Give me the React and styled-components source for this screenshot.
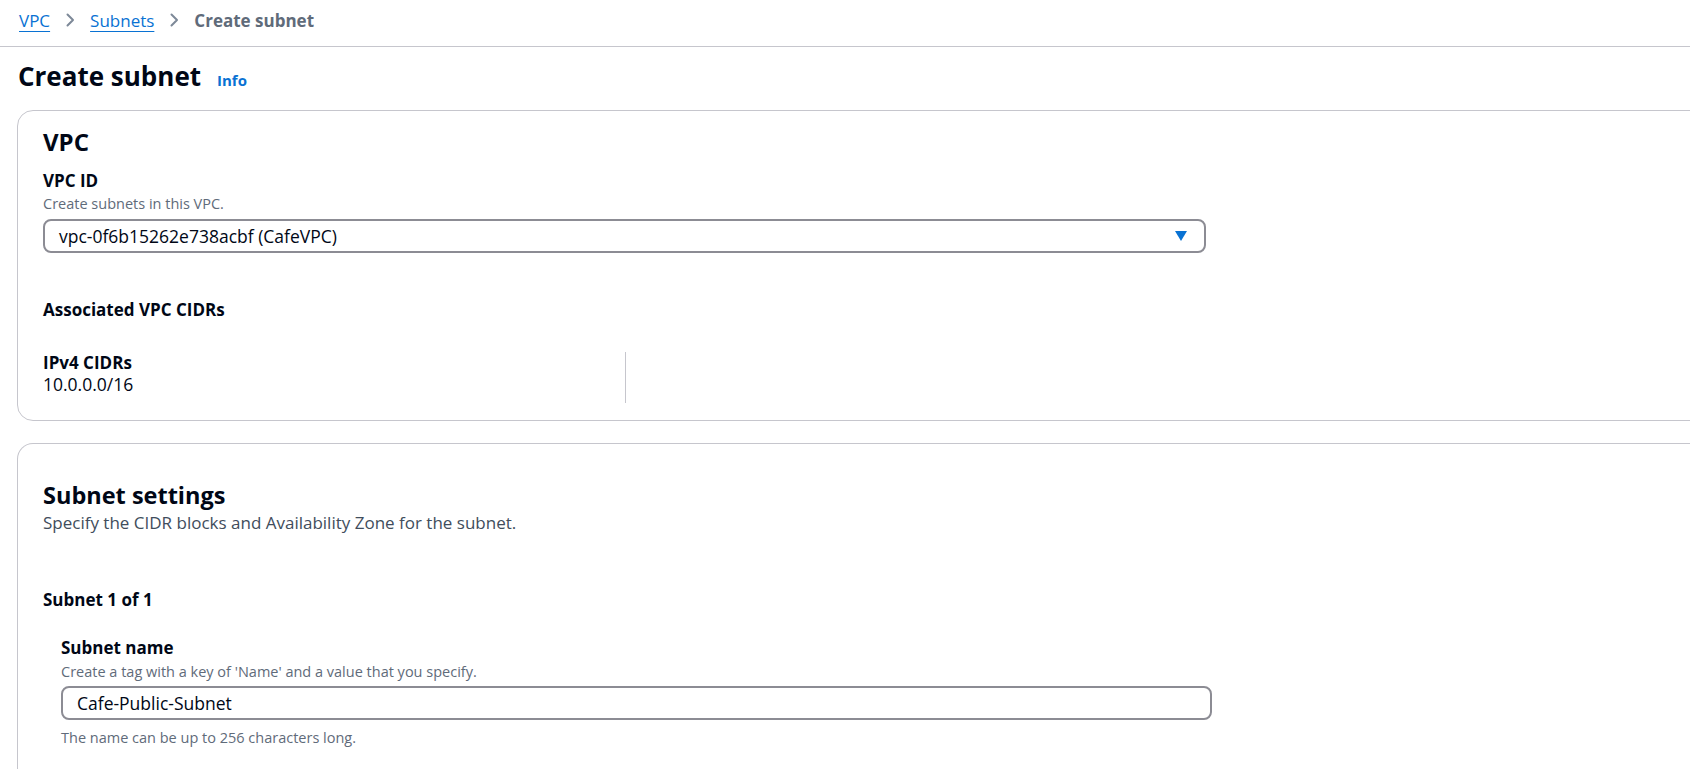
import React from 'react'
import styled, { createGlobalStyle } from 'styled-components'

const GlobalStyle = createGlobalStyle`
    html, body {
        margin: 0;
        padding: 0;
        background: #ffffff;
        overflow: hidden;
    }
    body {
        font-family: "Open Sans", "Noto Sans", sans-serif;
        color: #000716;
    }
`;

const Page = styled.div`
    width: 100%;
    height: 769px;
    overflow: hidden;
`;

const Breadcrumbs = styled.nav`
    height: 47px;
    box-sizing: border-box;
    display: flex;
    align-items: center;
    gap: 15px;
    padding: 0 19px 6px;
    border-bottom: 1px solid #c6c6cd;
    font-size: 17px;
`;

const Crumb = styled.a`
    color: #0972d3;
    text-decoration: underline;
    text-underline-offset: 4px;
    text-decoration-thickness: 1px;
    cursor: pointer;
`;

const CurrentCrumb = styled.span`
    color: #5f6b7a;
    font-weight: 700;
`;

const Chevron = styled.svg`
    width: 10px;
    height: 14px;
    color: #7d8998;
`;

const TitleRow = styled.div`
    display: flex;
    align-items: baseline;
    gap: 16px;
    padding: 11px 18px 0;
    height: 63px;
    box-sizing: border-box;
`;

const Title = styled.h1`
    margin: 0;
    font-size: 26px;
    font-weight: 700;
    line-height: 36px;
`;

const InfoLink = styled.a`
    color: #0972d3;
    font-size: 15px;
    font-weight: 700;
    cursor: pointer;
`;

const Container = styled.section`
    margin: ${({ top }) => top}px -60px 0 17px;
    border: 1px solid #c6c6cd;
    border-radius: 16px;
    padding: ${({ pad }) => pad};
    ${({ open }) => open && `
        border-bottom: none;
        border-bottom-left-radius: 0;
        border-bottom-right-radius: 0;
        min-height: 400px;
    `}
`;

const Heading = styled.h2`
    margin: 0;
    font-size: ${({ size }) => size || 24}px;
    font-weight: 700;
    line-height: 30px;
`;

const HeadingDesc = styled.p`
    margin: 1px 0 0;
    font-size: 17px;
    line-height: 24px;
    color: #414d5c;
`;

const Field = styled.div`
    display: flex;
    flex-direction: column;
    margin-top: ${({ top }) => top || 0}px;
    margin-left: ${({ indent }) => indent || 0}px;
`;

const Label = styled.div`
    font-size: 17px;
    font-weight: 700;
    line-height: 22px;
`;

const Desc = styled.div`
    margin-top: ${({ top }) => top || 0}px;
    font-size: 14.5px;
    line-height: 20px;
    color: #5f6b7a;
`;

const Control = styled.div`
    margin-top: ${({ top }) => top}px;
    width: ${({ w }) => w}px;
    height: 34px;
    box-sizing: border-box;
    border: 2px solid #8c8c94;
    border-radius: 8px;
    display: flex;
    align-items: center;
    justify-content: space-between;
    padding: 0 17px 0 14px;
    font-size: 17.5px;
    background: #ffffff;
`;

const Caret = styled.svg`
    width: 12px;
    height: 10px;
    color: #0972d3;
`;

const SubHeading = styled.div`
    font-size: 17px;
    font-weight: 700;
    line-height: 22px;
    margin-top: ${({ top }) => top}px;
`;

const Columns = styled.div`
    display: grid;
    grid-template-columns: 582px 1fr;
    margin-top: 31px;
`;

const Column = styled.div`
    display: flex;
    flex-direction: column;
    padding-left: ${({ divided }) => (divided ? '20px' : '0')};
    border-left: ${({ divided }) => (divided ? '1px solid #c6c6cd' : 'none')};
    min-height: 51px;
`;

const Value = styled.div`
    margin-top: -1px;
    font-size: 17.5px;
    line-height: 22px;
`;

const ChevronIcon = () => (
    <Chevron viewBox="0 0 10 14" fill="none">
        <path d="M2.5 1.5 L8 7 L2.5 12.5" stroke="currentColor" strokeWidth="2" strokeLinejoin="round" strokeLinecap="round" />
    </Chevron>
)

const App = () => {
    return (
        <Page>
            <GlobalStyle />
            <Breadcrumbs>
                <Crumb>VPC</Crumb>
                <ChevronIcon />
                <Crumb>Subnets</Crumb>
                <ChevronIcon />
                <CurrentCrumb>Create subnet</CurrentCrumb>
            </Breadcrumbs>

            <TitleRow>
                <Title>Create subnet</Title>
                <InfoLink>Info</InfoLink>
            </TitleRow>

            <Container top={0} pad="16px 25px 17px">
                <Heading>VPC</Heading>
                <Field top={13}>
                    <Label>VPC ID</Label>
                    <Desc top={2}>Create subnets in this VPC.</Desc>
                    <Control top={5} w={1163}>
                        <span>vpc-0f6b15262e738acbf (CafeVPC)</span>
                        <Caret viewBox="0 0 12 10">
                            <path d="M0 0 H12 L6 10 Z" fill="currentColor" />
                        </Caret>
                    </Control>
                </Field>
                <SubHeading top={46}>Associated VPC CIDRs</SubHeading>
                <Columns>
                    <Column>
                        <Label>IPv4 CIDRs</Label>
                        <Value>10.0.0.0/16</Value>
                    </Column>
                    <Column divided />
                </Columns>
            </Container>

            <Container top={22} pad="36px 25px 0" open>
                <Heading size={23.5}>Subnet settings</Heading>
                <HeadingDesc>Specify the CIDR blocks and Availability Zone for the subnet.</HeadingDesc>
                <SubHeading top={54}>Subnet 1 of 1</SubHeading>
                <Field top={26} indent={18}>
                    <Label>Subnet name</Label>
                    <Desc top={3}>Create a tag with a key of 'Name' and a value that you specify.</Desc>
                    <Control top={4} w={1151}>
                        <span>Cafe-Public-Subnet</span>
                    </Control>
                    <Desc top={8}>The name can be up to 256 characters long.</Desc>
                </Field>
            </Container>
        </Page>
    )
}

export default App
